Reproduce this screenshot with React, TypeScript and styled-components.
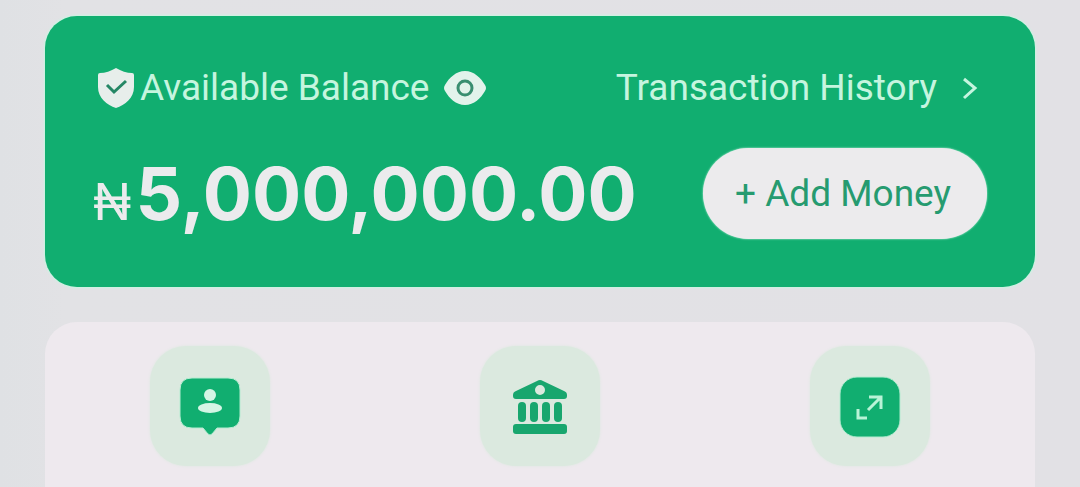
import React from "react";
import styled, { createGlobalStyle } from "styled-components";

const GlobalStyle = createGlobalStyle`
  *, *::before, *::after { box-sizing: border-box; }
  html { height: 100%; }
  body {
    margin: 0;
    min-height: 100%;
    background: linear-gradient(90deg, #dfe1e4 0%, #e2e2e5 6%, #e2e1e5 100%);
    font-family: Roboto, "Liberation Sans", sans-serif;
  }
  #root { overflow: hidden; }
`;

const Page = styled.main`
  display: flex;
  flex-direction: column;
  gap: 35px;
  min-height: 100vh;
  padding: 16px 45px 0;
`;

const BalanceCard = styled.section`
  display: flex;
  flex-direction: column;
  gap: 36px;
  padding: 48px;
  border-radius: 32px;
  background: #11ae70;
  box-shadow: 0 0 2px 1px #c9f5e2;
  color: #c5f5df;
`;

const Row = styled.div`
  display: flex;
  align-items: center;
  justify-content: space-between;
`;

const Label = styled.div`
  display: flex;
  align-items: center;
  gap: 5px;
  padding-left: 4px;
  font-size: 37px;
  line-height: 48px;
  white-space: nowrap;
`;

const IconButton = styled.button`
  display: flex;
  margin-left: 10px;
  padding: 0;
  border: 0;
  background: none;
  cursor: pointer;
`;

const HistoryLink = styled.a`
  display: flex;
  align-items: center;
  gap: 22px;
  padding-right: 4px;
  color: inherit;
  font-size: 37px;
  line-height: 48px;
  text-decoration: none;
  white-space: nowrap;
`;

const Amount = styled.div`
  display: flex;
  align-items: baseline;
  gap: 4px;
  color: #ebebed;
  font-family: Inter, "Liberation Sans", sans-serif;
  font-size: 73px;
  font-weight: 700;
  line-height: 91px;
  white-space: nowrap;
`;

const Currency = styled.span`
  font-size: 50px;
  font-weight: 400;
  line-height: 50px;
`;

const AddButton = styled.button`
  padding: 0 36px 0 32px;
  border: 0;
  border-radius: 46px;
  background: #ecebed;
  box-shadow: 0 0 2px #d5f8e8;
  color: #269b70;
  font-family: inherit;
  font-size: 37px;
  line-height: 91px;
  white-space: nowrap;
  cursor: pointer;
`;

const Shortcuts = styled.nav`
  display: grid;
  flex: 1;
  grid-template-columns: repeat(3, 1fr);
  justify-items: center;
  align-items: start;
  padding: 24px 0 20px;
  border-radius: 32px 32px 0 0;
  background: #eee9ee;
`;

const Tile = styled.button`
  display: flex;
  align-items: center;
  justify-content: center;
  width: 120px;
  height: 120px;
  padding: 0;
  border: 0;
  border-radius: 36px;
  background: #dbe9df;
  box-shadow: 0 0 3px #dbe9df;
  cursor: pointer;
`;

const ShieldIcon = () => (
  <svg width="38" height="42" viewBox="0 0 38 42" aria-hidden="true">
    <path d="M19 1C14 4 8 6 3 6Q1 6 1 8V20C1 31 10 38 19 41C28 38 37 31 37 20V8Q37 6 35 6C30 6 24 4 19 1Z" fill="#e7eeeb" />
    <path d="M10 18L17 25L29 14" fill="none" stroke="#258765" strokeWidth="3" />
  </svg>
);

const EyeIcon = () => (
  <svg width="42" height="34" viewBox="0 0 42 34" aria-hidden="true">
    <path d="M21 0C30 0 37 7 41 14Q43 17 41 20C37 27 30 34 21 34S5 27 1 20Q-1 17 1 14C5 7 12 0 21 0Z" fill="#e2f3eb" />
    <circle cx="21" cy="17" r="7" fill="none" stroke="#398e70" strokeWidth="3" />
  </svg>
);

const ChevronIcon = () => (
  <svg width="24" height="24" viewBox="0 0 24 24" fill="none" stroke="currentColor" strokeWidth="3" aria-hidden="true">
    <path d="M5 3L16 12L5 22" />
  </svg>
);

const ContactIcon = () => (
  <svg width="64" height="64" viewBox="0 0 64 64" aria-hidden="true">
    <path d="M14 4H50Q62 4 62 16V42Q62 54 50 54H39L34 60Q32 62 30 60L25 54H14Q2 54 2 42V16Q2 4 14 4Z" fill="#11ae70" stroke="#b5ecd1" strokeWidth="1" />
    <circle cx="32" cy="21" r="6" fill="#d5f5e5" />
    <ellipse cx="32" cy="34" rx="12" ry="5" fill="#d5f5e5" />
  </svg>
);

const BankIcon = () => (
  <svg width="64" height="64" viewBox="0 0 64 64" fill="#18a66e" aria-hidden="true">
    <path fillRule="evenodd" d="M29 7Q32 5 35 7L56 17Q59 18 59 21V22Q59 25 56 25H8Q5 25 5 22V21Q5 18 8 17ZM32 11A5 5 0 1 0 32 21A5 5 0 1 0 32 11Z" />
    <rect x="10" y="28" width="8" height="20" rx="4" />
    <rect x="22" y="28" width="8" height="20" rx="4" />
    <rect x="34" y="28" width="8" height="20" rx="4" />
    <rect x="46" y="28" width="8" height="20" rx="4" />
    <rect x="5" y="50" width="54" height="10" rx="3" />
  </svg>
);

const TransferIcon = () => (
  <svg width="64" height="64" viewBox="0 0 64 64" aria-hidden="true">
    <rect x="2" y="3" width="60" height="60" rx="17" fill="#11ae70" stroke="#b5ecd1" strokeWidth="1" />
    <path d="M31 23H43V35M43 23L30 36M20 35V44H29" fill="none" stroke="#b9f3d7" strokeWidth="3" />
  </svg>
);

export default function App() {
  return (
    <>
      <GlobalStyle />
      <Page>
        <BalanceCard>
          <Row>
            <Label>
              <ShieldIcon />
              <span>Available Balance</span>
              <IconButton aria-label="Hide balance">
                <EyeIcon />
              </IconButton>
            </Label>
            <HistoryLink href="#history">
              Transaction History
              <ChevronIcon />
            </HistoryLink>
          </Row>
          <Row>
            <Amount>
              <Currency>₦</Currency>
              <span>5,000,000.00</span>
            </Amount>
            <AddButton>+ Add Money</AddButton>
          </Row>
        </BalanceCard>
        <Shortcuts aria-label="Transfers">
          <Tile aria-label="To contact">
            <ContactIcon />
          </Tile>
          <Tile aria-label="To bank">
            <BankIcon />
          </Tile>
          <Tile aria-label="Withdraw">
            <TransferIcon />
          </Tile>
        </Shortcuts>
      </Page>
    </>
  );
}
